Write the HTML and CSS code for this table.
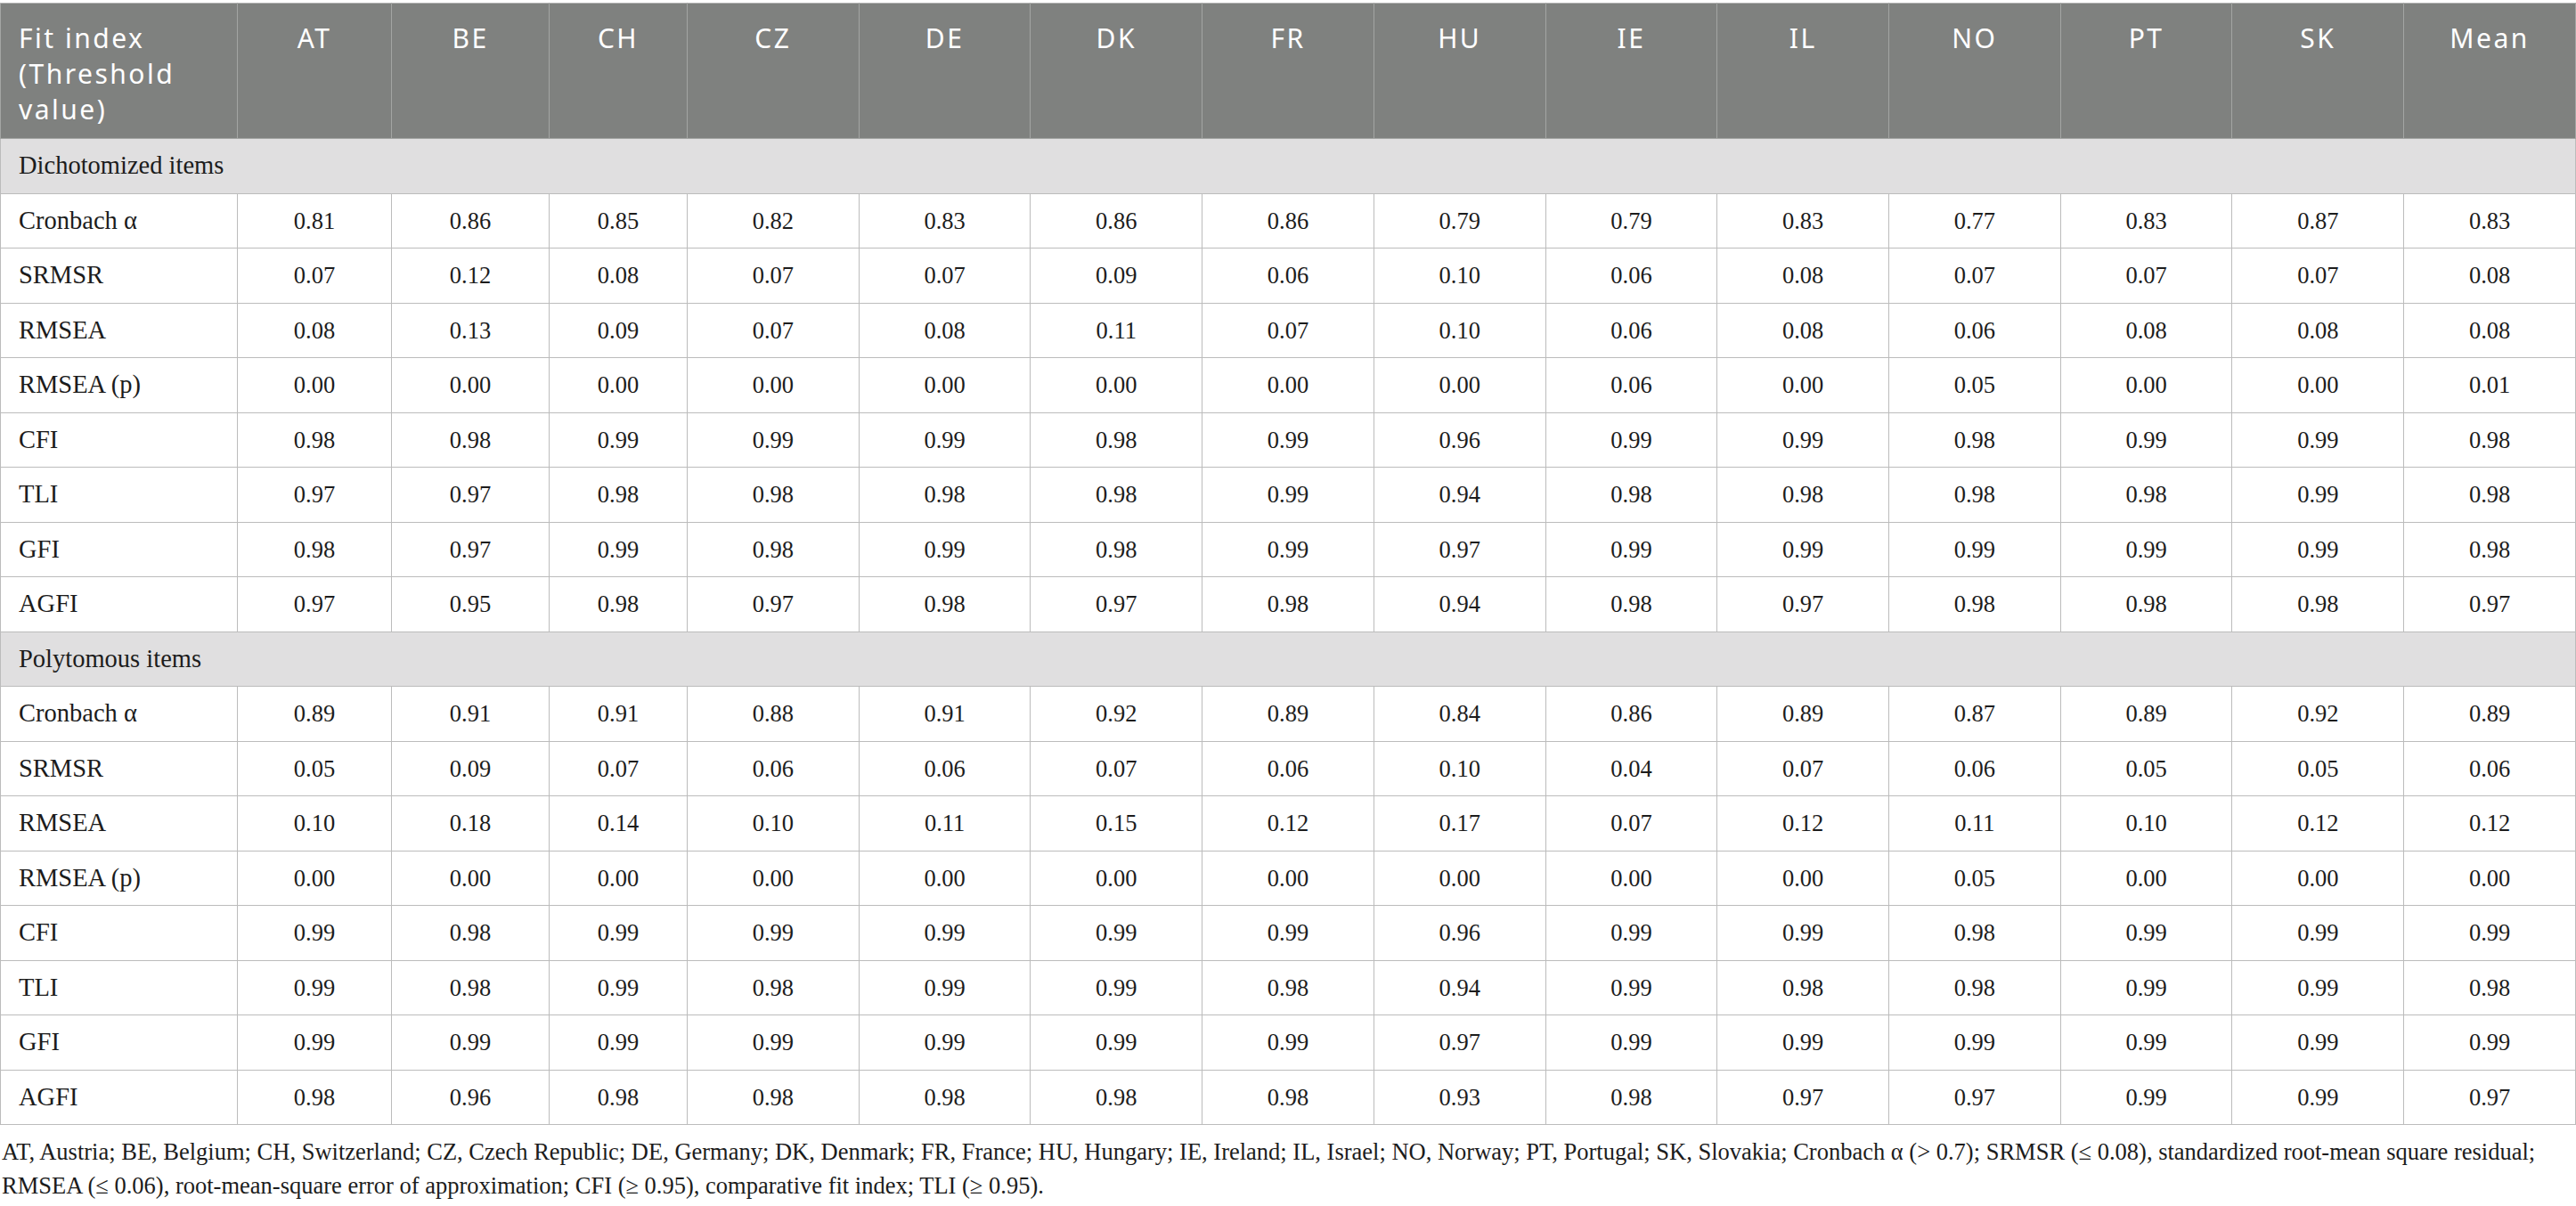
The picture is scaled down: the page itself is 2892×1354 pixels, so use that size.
FILE: index.html
```html
<!DOCTYPE html>
<html>

<head>
  <title>Fit indices</title>
  <link rel="stylesheet" href="styles.css">
</head>

<body>
  <div class="table-wrap">
    <table class="fit-table">
      <colgroup>
        <col class="col-index">
        <col class="col-at">
        <col class="col-be">
        <col class="col-ch">
        <col span="11">
      </colgroup>
      <thead>
        <tr>
          <th class="left">Fit index (Threshold value)</th>
          <th>AT</th>
          <th>BE</th>
          <th>CH</th>
          <th>CZ</th>
          <th>DE</th>
          <th>DK</th>
          <th>FR</th>
          <th>HU</th>
          <th>IE</th>
          <th>IL</th>
          <th>NO</th>
          <th>PT</th>
          <th>SK</th>
          <th>Mean</th>
        </tr>
      </thead>
      <tbody>
        <tr class="section"><td colspan="15">Dichotomized items</td></tr>
        <tr><td>Cronbach α</td><td>0.81</td><td>0.86</td><td>0.85</td><td>0.82</td><td>0.83</td><td>0.86</td><td>0.86</td><td>0.79</td><td>0.79</td><td>0.83</td><td>0.77</td><td>0.83</td><td>0.87</td><td>0.83</td></tr>
        <tr><td>SRMSR</td><td>0.07</td><td>0.12</td><td>0.08</td><td>0.07</td><td>0.07</td><td>0.09</td><td>0.06</td><td>0.10</td><td>0.06</td><td>0.08</td><td>0.07</td><td>0.07</td><td>0.07</td><td>0.08</td></tr>
        <tr><td>RMSEA</td><td>0.08</td><td>0.13</td><td>0.09</td><td>0.07</td><td>0.08</td><td>0.11</td><td>0.07</td><td>0.10</td><td>0.06</td><td>0.08</td><td>0.06</td><td>0.08</td><td>0.08</td><td>0.08</td></tr>
        <tr><td>RMSEA (p)</td><td>0.00</td><td>0.00</td><td>0.00</td><td>0.00</td><td>0.00</td><td>0.00</td><td>0.00</td><td>0.00</td><td>0.06</td><td>0.00</td><td>0.05</td><td>0.00</td><td>0.00</td><td>0.01</td></tr>
        <tr><td>CFI</td><td>0.98</td><td>0.98</td><td>0.99</td><td>0.99</td><td>0.99</td><td>0.98</td><td>0.99</td><td>0.96</td><td>0.99</td><td>0.99</td><td>0.98</td><td>0.99</td><td>0.99</td><td>0.98</td></tr>
        <tr><td>TLI</td><td>0.97</td><td>0.97</td><td>0.98</td><td>0.98</td><td>0.98</td><td>0.98</td><td>0.99</td><td>0.94</td><td>0.98</td><td>0.98</td><td>0.98</td><td>0.98</td><td>0.99</td><td>0.98</td></tr>
        <tr><td>GFI</td><td>0.98</td><td>0.97</td><td>0.99</td><td>0.98</td><td>0.99</td><td>0.98</td><td>0.99</td><td>0.97</td><td>0.99</td><td>0.99</td><td>0.99</td><td>0.99</td><td>0.99</td><td>0.98</td></tr>
        <tr><td>AGFI</td><td>0.97</td><td>0.95</td><td>0.98</td><td>0.97</td><td>0.98</td><td>0.97</td><td>0.98</td><td>0.94</td><td>0.98</td><td>0.97</td><td>0.98</td><td>0.98</td><td>0.98</td><td>0.97</td></tr>
        <tr class="section"><td colspan="15">Polytomous items</td></tr>
        <tr><td>Cronbach α</td><td>0.89</td><td>0.91</td><td>0.91</td><td>0.88</td><td>0.91</td><td>0.92</td><td>0.89</td><td>0.84</td><td>0.86</td><td>0.89</td><td>0.87</td><td>0.89</td><td>0.92</td><td>0.89</td></tr>
        <tr><td>SRMSR</td><td>0.05</td><td>0.09</td><td>0.07</td><td>0.06</td><td>0.06</td><td>0.07</td><td>0.06</td><td>0.10</td><td>0.04</td><td>0.07</td><td>0.06</td><td>0.05</td><td>0.05</td><td>0.06</td></tr>
        <tr><td>RMSEA</td><td>0.10</td><td>0.18</td><td>0.14</td><td>0.10</td><td>0.11</td><td>0.15</td><td>0.12</td><td>0.17</td><td>0.07</td><td>0.12</td><td>0.11</td><td>0.10</td><td>0.12</td><td>0.12</td></tr>
        <tr><td>RMSEA (p)</td><td>0.00</td><td>0.00</td><td>0.00</td><td>0.00</td><td>0.00</td><td>0.00</td><td>0.00</td><td>0.00</td><td>0.00</td><td>0.00</td><td>0.05</td><td>0.00</td><td>0.00</td><td>0.00</td></tr>
        <tr><td>CFI</td><td>0.99</td><td>0.98</td><td>0.99</td><td>0.99</td><td>0.99</td><td>0.99</td><td>0.99</td><td>0.96</td><td>0.99</td><td>0.99</td><td>0.98</td><td>0.99</td><td>0.99</td><td>0.99</td></tr>
        <tr><td>TLI</td><td>0.99</td><td>0.98</td><td>0.99</td><td>0.98</td><td>0.99</td><td>0.99</td><td>0.98</td><td>0.94</td><td>0.99</td><td>0.98</td><td>0.98</td><td>0.99</td><td>0.99</td><td>0.98</td></tr>
        <tr><td>GFI</td><td>0.99</td><td>0.99</td><td>0.99</td><td>0.99</td><td>0.99</td><td>0.99</td><td>0.99</td><td>0.97</td><td>0.99</td><td>0.99</td><td>0.99</td><td>0.99</td><td>0.99</td><td>0.99</td></tr>
        <tr><td>AGFI</td><td>0.98</td><td>0.96</td><td>0.98</td><td>0.98</td><td>0.98</td><td>0.98</td><td>0.98</td><td>0.93</td><td>0.98</td><td>0.97</td><td>0.97</td><td>0.99</td><td>0.99</td><td>0.97</td></tr>
      </tbody>
    </table>

    <p class="footnote">AT, Austria; BE, Belgium; CH, Switzerland; CZ, Czech Republic; DE, Germany; DK, Denmark; FR, France; HU, Hungary; IE, Ireland; IL, Israel; NO, Norway; PT, Portugal; SK, Slovakia; Cronbach α (&gt; 0.7); SRMSR (≤ 0.08), standardized root-mean square residual; RMSEA (≤ 0.06), root-mean-square error of approximation; CFI (≥ 0.95), comparative fit index; TLI (≥ 0.95).</p>
  </div>
</body>

</html>
```

FILE: styles.css
```css
body {
  margin: 0;
  padding: 0;
  background-color: #ffffff;
  font-family: "Liberation Serif", "Times New Roman", serif;
  color: #1c1c1c;
}

.table-wrap {
  width: 2892px;
  padding-top: 3px;
}

.fit-table {
  width: 100%;
  border-collapse: collapse;
  table-layout: fixed;
}

.col-index {
  width: 266px;
}

.col-at {
  width: 173px;
}

.col-be {
  width: 177px;
}

.col-ch {
  width: 155px;
}

.fit-table th {
  height: 152px;
  box-sizing: border-box;
  padding: 19px 20px 0;
  vertical-align: top;
  background-color: #7f817f;
  color: #ffffff;
  font-family: "Noto Sans", "Open Sans", sans-serif;
  font-weight: normal;
  font-size: 30px;
  letter-spacing: 2.5px;
  line-height: 40px;
  text-align: center;
  border: 1px solid #a3a5a3;
  border-top-color: #b5b5b5;
}

.fit-table th.left {
  text-align: left;
}

.fit-table td {
  height: 61.5px;
  box-sizing: border-box;
  padding: 0 20px;
  font-size: 26.5px;
  line-height: 32px;
  text-align: center;
  vertical-align: middle;
  border: 1px solid #bcbcbc;
}

.fit-table td:first-child {
  text-align: left;
  font-size: 28.5px;
}

.fit-table tr.section td {
  background-color: #e0dfe0;
  text-align: left;
}

.footnote {
  margin: 0;
  padding: 11px 0 0 2px;
  font-size: 26.5px;
  line-height: 38px;
}
```
